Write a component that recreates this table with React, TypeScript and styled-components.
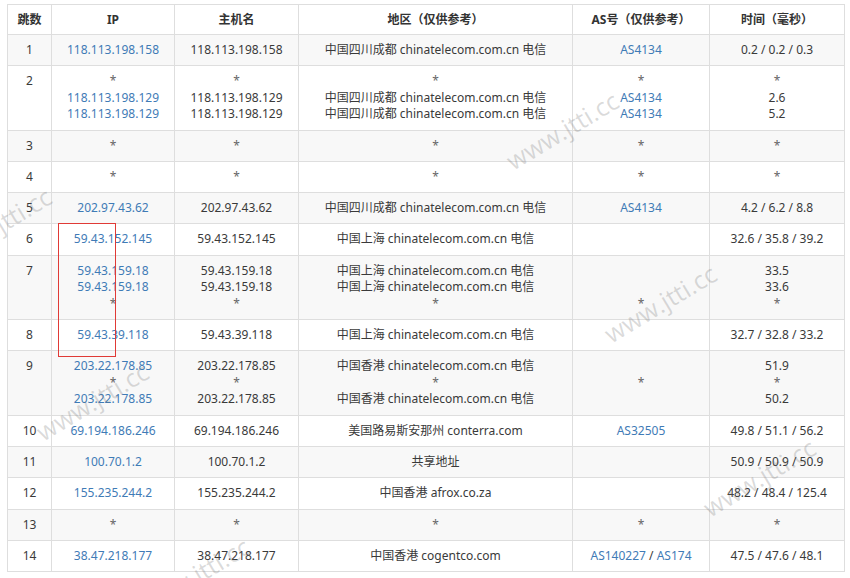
import React from "react";
import styled, { createGlobalStyle } from "styled-components";

const Global = createGlobalStyle`
  html, body { margin: 0; padding: 0; background: #fff; }
  body { font-family: "Noto Sans", "Noto Sans CJK SC", sans-serif; }
`;

const Page = styled.div`
  position: relative;
  width: 850px;
  height: 578px;
  overflow: hidden;
  box-sizing: border-box;
  padding: 4px 0 0 7px;
  background: #fff;
`;

const Table = styled.table`
  width: 837px;
  table-layout: fixed;
  border-collapse: collapse;
  font-size: 12px;
  color: #3a3a3a;
`;

const Th = styled.th`
  border: 1px solid #dedede;
  padding: 6px 6px;
  line-height: 17px;
  font-weight: 700;
  color: #333;
  text-align: center;
  background: #fff;
`;

const Tr = styled.tr<{ $striped: boolean }>`
  background: ${(p) => (p.$striped ? "#f8f8f8" : "#fff")};
`;

const Td = styled.td`
  border: 1px solid #dedede;
  padding: 7px 4px 6.8px;
  line-height: 16.5px;
  text-align: center;
  vertical-align: top;
  white-space: nowrap;
`;

const Line = styled.div`
  min-height: 16.5px;
`;

const Link = styled.span`
  color: #3f7bb6;
`;

const Star = styled.span`
  color: #666;
`;

const Watermark = styled.span<{ $x: number; $y: number }>`
  position: absolute;
  left: ${(p) => p.$x}px;
  top: ${(p) => p.$y}px;
  transform: translate(-50%, -50%) rotate(-31deg);
  font-family: "Open Sans", "Noto Sans", sans-serif;
  font-size: 25px;
  color: rgba(110, 110, 110, 0.25);
  white-space: nowrap;
  pointer-events: none;
`;

const RedBox = styled.div`
  position: absolute;
  left: 58px;
  top: 223px;
  width: 56px;
  height: 132px;
  border: 1.5px solid #e03a36;
`;

type Kind = "ip" | "as" | "text";

function renderLine(line: string, kind: Kind) {
  if (line === "") return "\u00a0";
  if (line === "*") return <Star>*</Star>;
  if (kind === "ip") return <Link>{line}</Link>;
  if (kind === "as") {
    const parts = line.split(" / ");
    return parts.map((p, i) => (
      <React.Fragment key={i}>
        {i > 0 && " / "}
        <Link>{p}</Link>
      </React.Fragment>
    ));
  }
  return line;
}

function Cell({ lines, kind }: { lines: string[]; kind: Kind }) {
  return (
    <Td>
      {lines.map((l, i) => (
        <Line key={i}>{renderLine(l, kind)}</Line>
      ))}
    </Td>
  );
}

type Row = {
  hop: string;
  ip: string[];
  host: string[];
  area: string[];
  as: string[];
  time: string[];
};

const CT = "chinatelecom.com.cn 电信";
const SC = "中国四川成都 " + CT;
const SH = "中国上海 " + CT;
const HK = "中国香港 " + CT;
const STARS = (n: string) => ({ hop: n, ip: ["*"], host: ["*"], area: ["*"], as: ["*"], time: ["*"] });

const rows: Row[] = [
  { hop: "1", ip: ["118.113.198.158"], host: ["118.113.198.158"], area: [SC], as: ["AS4134"], time: ["0.2 / 0.2 / 0.3"] },
  {
    hop: "2",
    ip: ["*", "118.113.198.129", "118.113.198.129"],
    host: ["*", "118.113.198.129", "118.113.198.129"],
    area: ["*", SC, SC],
    as: ["*", "AS4134", "AS4134"],
    time: ["*", "2.6", "5.2"],
  },
  STARS("3"),
  STARS("4"),
  { hop: "5", ip: ["202.97.43.62"], host: ["202.97.43.62"], area: [SC], as: ["AS4134"], time: ["4.2 / 6.2 / 8.8"] },
  { hop: "6", ip: ["59.43.152.145"], host: ["59.43.152.145"], area: [SH], as: [""], time: ["32.6 / 35.8 / 39.2"] },
  {
    hop: "7",
    ip: ["59.43.159.18", "59.43.159.18", "*"],
    host: ["59.43.159.18", "59.43.159.18", "*"],
    area: [SH, SH, "*"],
    as: ["", "", "*"],
    time: ["33.5", "33.6", "*"],
  },
  { hop: "8", ip: ["59.43.39.118"], host: ["59.43.39.118"], area: [SH], as: [""], time: ["32.7 / 32.8 / 33.2"] },
  {
    hop: "9",
    ip: ["203.22.178.85", "*", "203.22.178.85"],
    host: ["203.22.178.85", "*", "203.22.178.85"],
    area: [HK, "*", HK],
    as: ["", "*", ""],
    time: ["51.9", "*", "50.2"],
  },
  { hop: "10", ip: ["69.194.186.246"], host: ["69.194.186.246"], area: ["美国路易斯安那州 conterra.com"], as: ["AS32505"], time: ["49.8 / 51.1 / 56.2"] },
  { hop: "11", ip: ["100.70.1.2"], host: ["100.70.1.2"], area: ["共享地址"], as: [""], time: ["50.9 / 50.9 / 50.9"] },
  { hop: "12", ip: ["155.235.244.2"], host: ["155.235.244.2"], area: ["中国香港 afrox.co.za"], as: [""], time: ["48.2 / 48.4 / 125.4"] },
  STARS("13"),
  { hop: "14", ip: ["38.47.218.177"], host: ["38.47.218.177"], area: ["中国香港 cogentco.com"], as: ["AS140227 / AS174"], time: ["47.5 / 47.6 / 48.1"] },
];

const marks: [number, number][] = [
  [562, 130],
  [-5, 226],
  [660, 303],
  [92, 401],
  [759, 477],
  [193, 576],
];

export default function App() {
  return (
    <Page>
      <Global />
      <Table>
        <colgroup>
          <col style={{ width: 44 }} />
          <col style={{ width: 123 }} />
          <col style={{ width: 124 }} />
          <col style={{ width: 274 }} />
          <col style={{ width: 137 }} />
          <col style={{ width: 135 }} />
        </colgroup>
        <thead>
          <tr>
            <Th>跳数</Th>
            <Th>IP</Th>
            <Th>主机名</Th>
            <Th>地区（仅供参考）</Th>
            <Th>AS号（仅供参考）</Th>
            <Th>时间（毫秒）</Th>
          </tr>
        </thead>
        <tbody>
          {rows.map((r, i) => (
            <Tr key={r.hop} $striped={i % 2 === 0}>
              <Cell lines={[r.hop]} kind="text" />
              <Cell lines={r.ip} kind="ip" />
              <Cell lines={r.host} kind="text" />
              <Cell lines={r.area} kind="text" />
              <Cell lines={r.as} kind="as" />
              <Cell lines={r.time} kind="text" />
            </Tr>
          ))}
        </tbody>
      </Table>
      <RedBox />
      {marks.map(([x, y], i) => (
        <Watermark key={i} $x={x} $y={y}>
          www.jtti.cc
        </Watermark>
      ))}
    </Page>
  );
}
